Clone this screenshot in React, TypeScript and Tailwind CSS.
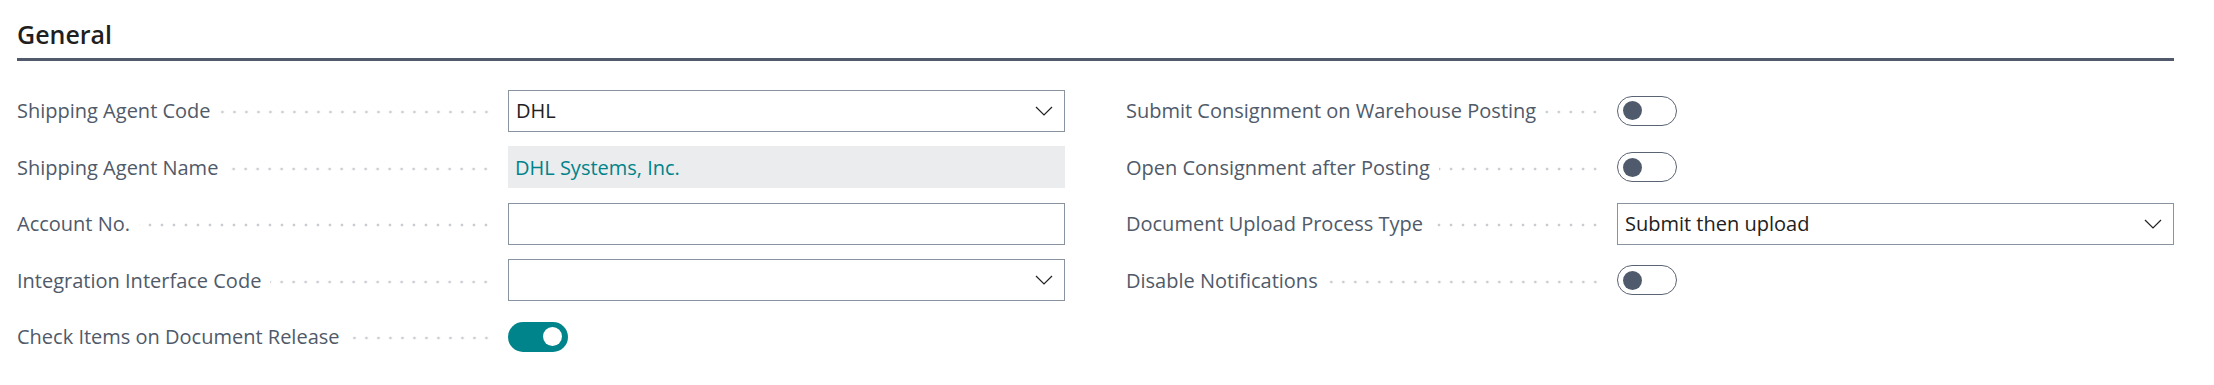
type Field =
  | { label: string; kind: 'select'; value: string }
  | { label: string; kind: 'readonly'; value: string }
  | { label: string; kind: 'text'; value: string }
  | { label: string; kind: 'toggle'; on: boolean };

const leftFields: Field[] = [
  { label: 'Shipping Agent Code', kind: 'select', value: 'DHL' },
  { label: 'Shipping Agent Name', kind: 'readonly', value: 'DHL Systems, Inc.' },
  { label: 'Account No.', kind: 'text', value: '' },
  { label: 'Integration Interface Code', kind: 'select', value: '' },
  { label: 'Check Items on Document Release', kind: 'toggle', on: true },
];

const rightFields: Field[] = [
  { label: 'Submit Consignment on Warehouse Posting', kind: 'toggle', on: false },
  { label: 'Open Consignment after Posting', kind: 'toggle', on: false },
  { label: 'Document Upload Process Type', kind: 'select', value: 'Submit then upload' },
  { label: 'Disable Notifications', kind: 'toggle', on: false },
];

function Chevron() {
  return (
    <svg width="18" height="10" viewBox="0 0 18 10" className="shrink-0">
      <polyline points="1,1 9,9 17,1" fill="none" stroke="#212121" strokeWidth="1.2" />
    </svg>
  );
}

function Toggle({ on }: { on: boolean }) {
  if (on) {
    return (
      <div className="flex h-[30px] w-[60px] items-center justify-end rounded-full bg-[#00848b] pr-[6px]">
        <div className="h-[19px] w-[19px] rounded-full bg-white" />
      </div>
    );
  }
  return (
    <div className="flex h-[30px] w-[60px] items-center rounded-full border border-[#5b6473] bg-white pl-[5px]">
      <div className="h-[19px] w-[19px] rounded-full bg-[#4f5b6c]" />
    </div>
  );
}

function Control({ field }: { field: Field }) {
  if (field.kind === 'toggle') return <Toggle on={field.on} />;
  if (field.kind === 'readonly') {
    return (
      <div className="flex h-[42px] w-full items-center bg-[#ebecee] pl-[7px] pt-[1px] text-[#00838a]">
        {field.value}
      </div>
    );
  }
  return (
    <div className="flex h-[42px] w-full items-center justify-between border border-[#8a93a0] bg-white pl-[7px] pr-[11px] text-[#212121]">
      <span className="pt-[1px]">{field.value}</span>
      {field.kind === 'select' && <Chevron />}
    </div>
  );
}

function Row({ field }: { field: Field }) {
  return (
    <div className="flex h-[56.5px] items-center">
      <div className="flex min-w-0 flex-1 items-center pr-[16px]">
        <span className="whitespace-nowrap pt-[1px] text-[#505a69]">{field.label}</span>
        <span className="ml-[9px] mt-[3px] h-[4px] flex-1 bg-[radial-gradient(circle,#c8cbd0_1.1px,transparent_1.7px)] bg-[length:12px_4px] bg-right bg-repeat-x" />
      </div>
      <div className="w-[557px] shrink-0">
        <Control field={field} />
      </div>
    </div>
  );
}

export default function App() {
  return (
    <div className="h-[385px] w-[2214px] bg-white pl-[17px] pr-[40px] font-['Open_Sans',sans-serif] text-[20px] leading-[28px]">
      <div className="border-b-[3px] border-[#505a6b] pb-[8px] pt-[18px]">
        <h2 className="text-[25px] font-semibold leading-[32px] text-[#1f1f1f]">General</h2>
      </div>

      <div className="mt-[21.5px] grid grid-cols-2 gap-x-[61px]">
        <div>
          {leftFields.map((f) => (
            <Row key={f.label} field={f} />
          ))}
        </div>
        <div>
          {rightFields.map((f) => (
            <Row key={f.label} field={f} />
          ))}
        </div>
      </div>
    </div>
  );
}
